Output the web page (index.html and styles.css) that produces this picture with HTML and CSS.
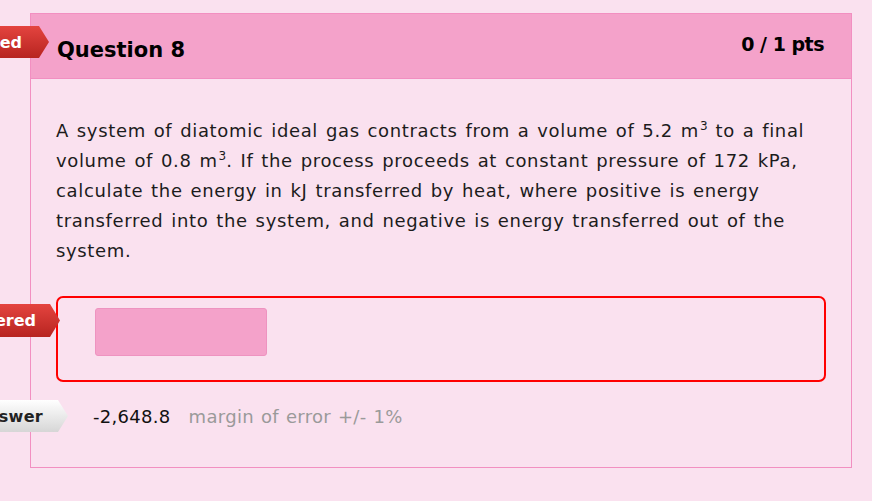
FILE: index.html
```
<!DOCTYPE html>
<html>
<head>
<meta charset="utf-8">
<link rel="stylesheet" href="styles.css">
</head>
<body>
<div class="card">
  <div class="flag flag-red flag-q"><span>Unanswered</span></div>
  <div class="header">
    <div class="title">Question 8</div>
    <div class="pts">0 / 1 pts</div>
  </div>
  <div class="body">
    <p class="text">A system of diatomic ideal gas contracts from a volume of 5.2 m<sup>3</sup> to a final volume of 0.8 m<sup>3</sup>. If the process proceeds at constant pressure of 172 kPa, calculate the energy in kJ transferred by heat, where positive is energy transferred into the system, and negative is energy transferred out of the system.</p>
    <div class="answer-wrap">
      <div class="flag flag-red flag-you"><span>You Answered</span></div>
      <div class="answer-box">
        <div class="input"></div>
      </div>
    </div>
    <div class="correct">
      <div class="flag flag-grey flag-correct"><span>Correct Answer</span></div>
      <span class="value">-2,648.8</span>
      <span class="margin">margin of error +/- 1%</span>
    </div>
  </div>
</div>
</body>
</html>
```
FILE: styles.css
```
html, body {
  margin: 0;
  padding: 0;
  background: #fae1ef;
  font-family: "DejaVu Sans", "Liberation Sans", sans-serif;
  color: #1a1a1a;
  overflow: hidden;
}
body {
  padding: 13px 0 0 30px;
}
.card {
  position: relative;
  width: 822px;
  height: 455px;
  border: 1px solid #f28fc1;
  box-sizing: border-box;
}
.header {
  height: 65px;
  background: #f4a2ca;
  border-bottom: 1px solid #f28fc1;
  box-sizing: border-box;
  display: flex;
  justify-content: space-between;
  align-items: center;
  padding: 0 27px 0 26px;
}
.title {
  font-weight: 700;
  font-size: 21px;
  color: #000;
  margin-top: 7px;
}
.pts {
  font-weight: 700;
  font-size: 19px;
  color: #000;
  margin-top: -5px;
  letter-spacing: -0.5px;
}
.body {
  padding: 37px 20px 0 25px;
}
.text {
  margin: 0;
  font-size: 18px;
  line-height: 30px;
  letter-spacing: 0.65px;
  word-spacing: 1.5px;
  color: #1c1c1c;
}
.text sup {
  font-size: 12px;
  line-height: 0;
  vertical-align: 7px;
  letter-spacing: 0;
  margin-left: 1px;
}
.answer-wrap {
  position: relative;
  margin-top: 30px;
}
.answer-box {
  width: 770px;
  height: 86px;
  border: 2px solid #ff0000;
  border-radius: 7px;
  box-sizing: border-box;
  padding: 10px 0 0 37px;
}
.input {
  width: 172px;
  height: 48px;
  background: #f4a2ca;
  border: 1px solid #ee93c0;
  border-radius: 3px;
  box-sizing: border-box;
}
.correct {
  position: relative;
  display: flex;
  align-items: center;
  height: 32px;
  margin-top: 18px;
  padding-left: 37px;
  font-size: 18px;
  letter-spacing: 0.3px;
  word-spacing: 1px;
}
.value {
  color: #111;
}
.margin {
  color: #9a9a9a;
  margin-left: 18px;
}
.flag {
  position: absolute;
  height: 32px;
  display: flex;
  align-items: center;
  justify-content: flex-end;
  box-sizing: border-box;
  font-weight: 700;
  font-size: 16px;
  white-space: nowrap;
  clip-path: polygon(0 0, calc(100% - 10px) 0, 100% 50%, calc(100% - 10px) 100%, 0 100%);
}
.flag-red {
  background: linear-gradient(#e4443f, #b72420);
  color: #fff;
}
.flag-grey {
  background: linear-gradient(#ffffff, #d6d6d6);
  color: #222;
}
.flag-q {
  left: -150px;
  top: 12px;
  width: 168px;
  padding-right: 27px;
}
.flag-you {
  left: -150px;
  top: 8px;
  width: 154px;
  height: 33px;
  padding-right: 24px;
}
.flag-correct {
  left: -150px;
  top: 0;
  width: 162px;
  padding-right: 25px;
}
```
